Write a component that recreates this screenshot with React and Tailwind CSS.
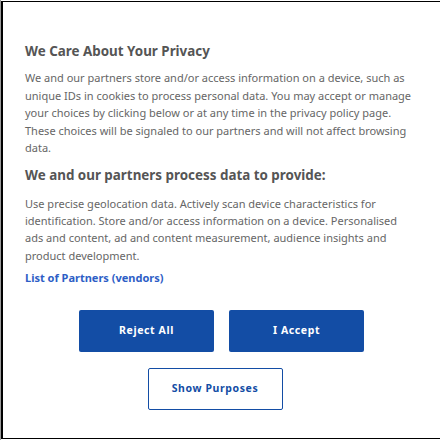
import React from 'react';

const App = () => (
  <div className="w-[440px] h-[440px] bg-white border-l border-l-[#9a9a9a] pt-px" style={{ fontFamily: '"Noto Sans", "Open Sans", sans-serif' }}>
    <div className="h-[438px] border-l-2 border-t border-b border-black bg-white px-[22px] pt-[39px]">
      <h2 className="text-[13.4px] leading-5 font-bold text-[#555]">We Care About Your Privacy</h2>
      <p className="mt-[8px] text-[11px] leading-[17.6px] text-[#666]">
        We and our partners store and/or access information on a device, such as unique IDs in cookies to process personal data. You may accept or manage your choices by clicking below or at any time in the privacy policy page. These choices will be signaled to our partners and will not affect browsing data.
      </p>
      <h3 className="mt-[8px] text-[13.4px] leading-5 font-bold text-[#555]">We and our partners process data to provide:</h3>
      <p className="mt-[10px] text-[11px] leading-[17.2px] text-[#666]">
        Use precise geolocation data. Actively scan device characteristics for identification. Store and/or access information on a device. Personalised ads and content, ad and content measurement, audience insights and product development.
      </p>
      <a className="block mt-[6px] text-[11px] leading-4 font-bold text-[#2d5ec6]">List of Partners (vendors)</a>
      <div className="mt-[24px] flex justify-center gap-[15px]">
        <button className="w-[135px] h-[42px] rounded-[2px] bg-[#134da5] text-white text-[10.5px] font-bold tracking-[0.6px]">Reject All</button>
        <button className="w-[135px] h-[42px] rounded-[2px] bg-[#134da5] text-white text-[10.5px] font-bold tracking-[0.6px]">I Accept</button>
      </div>
      <div className="mt-[16px] flex justify-center pr-[13px]">
        <button className="w-[135px] h-[42px] rounded-[2px] border border-[#134da5] bg-white text-[#134da5] text-[10.5px] font-bold tracking-[0.6px]">Show Purposes</button>
      </div>
    </div>
  </div>
);

export default App;
